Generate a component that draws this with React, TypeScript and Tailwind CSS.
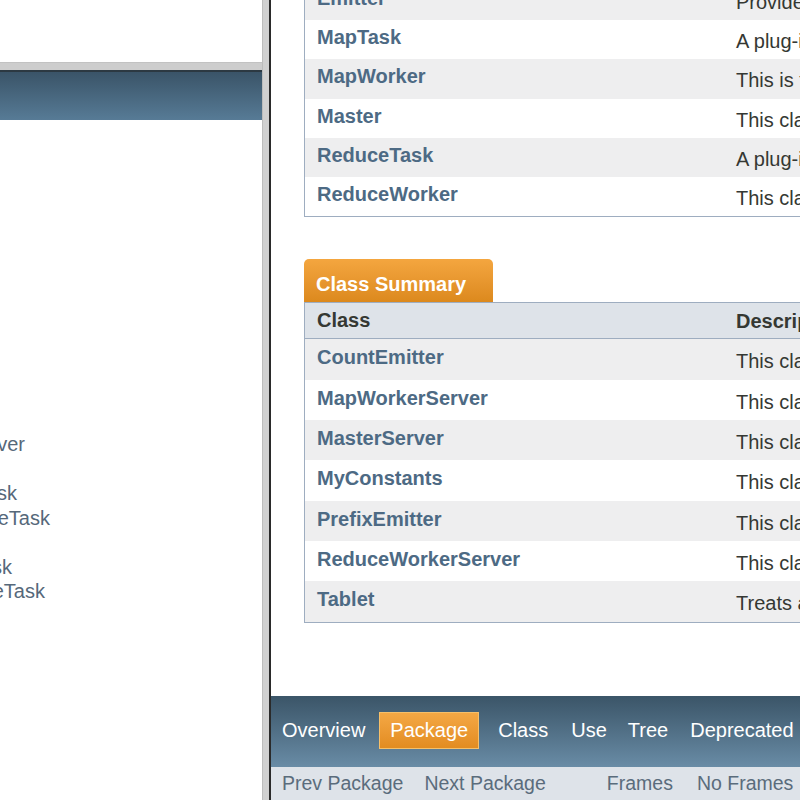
import React from "react";

const font = { fontFamily: '"Liberation Sans", Arial, sans-serif' };

const ifaceRows = [
  ["Emitter", "Provides"],
  ["MapTask", "A plug-in"],
  ["MapWorker", "This is the"],
  ["Master", "This class"],
  ["ReduceTask", "A plug-in"],
  ["ReduceWorker", "This class"],
];

const classRows = [
  ["CountEmitter", "This class"],
  ["MapWorkerServer", "This class"],
  ["MasterServer", "This class"],
  ["MyConstants", "This class"],
  ["PrefixEmitter", "This class"],
  ["ReduceWorkerServer", "This class"],
  ["Tablet", "Treats a"],
];

const leftLines: [string, number][] = [
  ["MapWorkerServer", 25],
  ["", 0],
  ["CountMapTask", 17],
  ["CountReduceTask", 50],
  ["", 0],
  ["PrefixMapTask", 12],
  ["PrefixReduceTask", 45],
];

export default function App() {
  return (
    <div className="w-[800px] h-[800px] overflow-hidden flex bg-white text-[20px]" style={font}>
      {/* Left frame */}
      <div className="w-[262px] h-full flex flex-col shrink-0">
        <div className="h-[62px] bg-white" />
        <div className="h-[8px] bg-[#cdcdcd] border-t border-[#c2c2c2]" />
        <div className="h-[50px] border-t-2 border-[#2c3942] bg-gradient-to-b from-[#3a5468] to-[#577b96]" />
        <div className="flex-1 bg-white overflow-hidden pt-[312px] flex flex-col">
          {leftLines.map(([name, w], i) => (
            <div key={i} className="h-[24.5px] flex justify-end leading-[24.5px] text-[#56687a] whitespace-nowrap" style={{ width: w }}>
              {name}
            </div>
          ))}
        </div>
      </div>
      {/* Divider */}
      <div className="w-[7px] h-full bg-[#d0d0d0] border-l border-[#bcbcbc] shrink-0" />
      <div className="w-[2px] h-full bg-[#2a2a2a] shrink-0" />
      {/* Right frame */}
      <div className="flex-1 h-full flex flex-col overflow-hidden">
        <div className="flex-1 overflow-hidden pl-[33px]">
          <div className="w-[700px] -mt-[19px]">
            {/* Interface table */}
            <div className="border-l border-b border-[#9eadc0]">
              {ifaceRows.map(([n, d], i) => (
                <div key={n} className={`h-[39.2px] flex ${i % 2 === 0 ? "bg-[#eeeeef]" : "bg-white"}`}>
                  <div className="w-[419px] pl-[12px] pt-[7px] leading-[20px] font-bold text-[#4d6a84]">{n}</div>
                  <div className="flex-1 pl-[12px] pt-[11px] leading-[20px] text-[#353833] whitespace-nowrap">{d}</div>
                </div>
              ))}
            </div>
            {/* Class summary */}
            <div className="mt-[42px] w-[189px] h-[43px] rounded-t-[5px] bg-gradient-to-b from-[#f4a63f] to-[#dc891d] pl-[12px] pt-[15px] leading-[20px] font-bold text-white">
              Class Summary
            </div>
            <div className="border-l border-b border-[#9eadc0]">
              <div className="h-[37px] flex bg-[#dee3e9] border-t border-b border-[#9eadc0]">
                <div className="w-[419px] pl-[12px] pt-[7px] leading-[20px] font-bold text-[#353833]">Class</div>
                <div className="flex-1 pl-[12px] pt-[8px] leading-[20px] font-bold text-[#353833]">Description</div>
              </div>
              {classRows.map(([n, d], i) => (
                <div key={n} className={`h-[40.4px] flex ${i % 2 === 0 ? "bg-[#eeeeef]" : "bg-white"}`}>
                  <div className="w-[419px] pl-[12px] pt-[8px] leading-[20px] font-bold text-[#4d6a84]">{n}</div>
                  <div className="flex-1 pl-[12px] pt-[12px] leading-[20px] text-[#353833] whitespace-nowrap">{d}</div>
                </div>
              ))}
            </div>
          </div>
        </div>
        {/* Bottom nav */}
        <div className="h-[71px] shrink-0 bg-gradient-to-b from-[#3b5568] to-[#698ca6] flex items-center pl-[11px] pb-[3px] whitespace-nowrap text-white">
          <span>Overview</span>
          <span className="ml-[14px] h-[37px] px-[10px] flex items-center bg-gradient-to-b from-[#f4a844] to-[#e38c20] border border-[#f6c06a]">Package</span>
          <span className="ml-[19px]">Class</span>
          <span className="ml-[23px]">Use</span>
          <span className="ml-[21px]">Tree</span>
          <span className="ml-[22px]">Deprecated</span>
          <span className="ml-[20px]">Index</span>
        </div>
        <div className="h-[33px] shrink-0 bg-[#dee3e9] flex items-center pl-[11px] whitespace-nowrap text-[19.5px] text-[#5a6c7c]">
          <span>Prev Package</span>
          <span className="ml-[21px]">Next Package</span>
          <span className="ml-[61px]">Frames</span>
          <span className="ml-[24px]">No Frames</span>
        </div>
      </div>
    </div>
  );
}
